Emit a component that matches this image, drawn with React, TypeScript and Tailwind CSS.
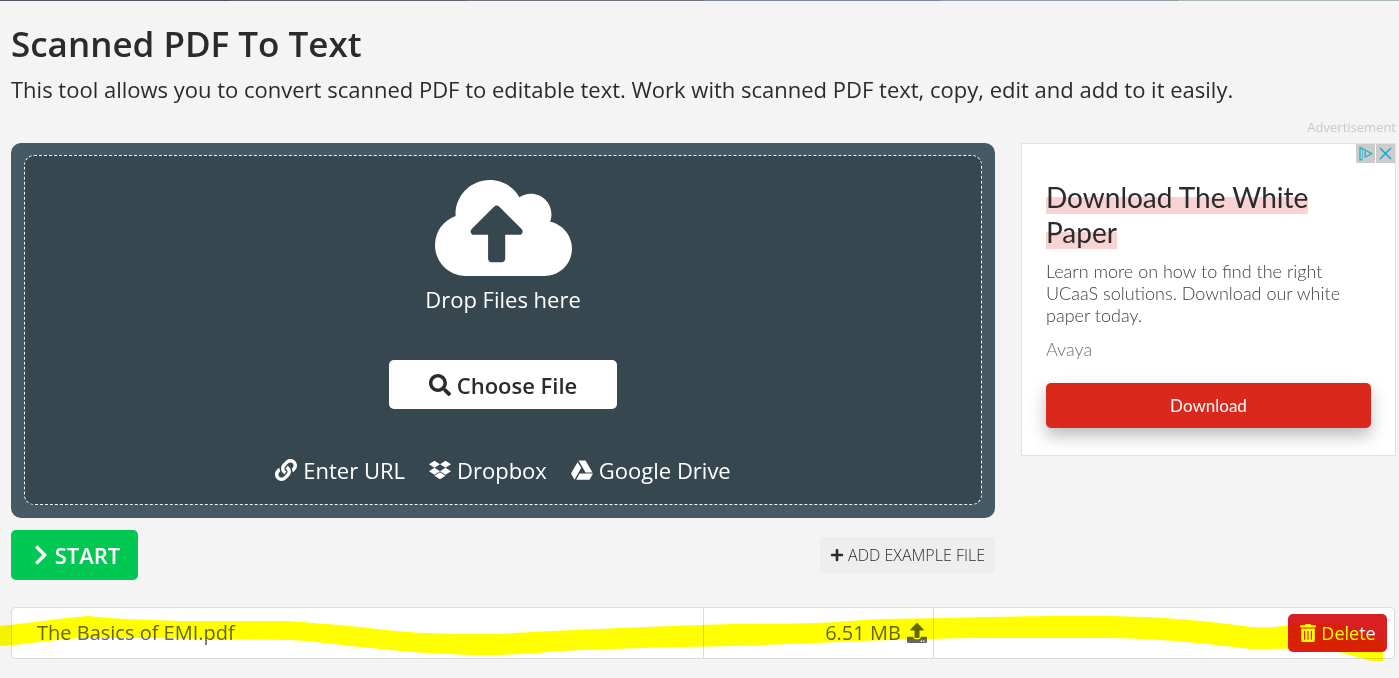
import type { ReactNode } from "react";
import {
  FaChevronRight,
  FaCloudUploadAlt,
  FaDropbox,
  FaGoogleDrive,
  FaLink,
  FaPlus,
  FaSearch,
  FaTrashAlt,
  FaUpload,
} from "react-icons/fa";

const files = [{ name: "The Basics of EMI.pdf", size: "6.51 MB" }];

function TopStrip() {
  return (
    <div className="flex h-px">
      <span className="w-[229px] bg-[#4e5560]" />
      <span className="flex-1 bg-[#5c636e]" />
      <span className="flex-1 bg-[#6c7480]" />
      <span className="flex-1 bg-[#7c8595]" />
      <span className="flex-1 bg-[#929ba8]" />
      <span className="w-[221px] bg-[#a8b5b3]" />
    </div>
  );
}

function SourceLink({ icon, children }: { icon: ReactNode; children: ReactNode }) {
  return (
    <a href="#" className="flex items-center gap-[6px] text-white">
      {icon}
      {children}
    </a>
  );
}

function DropZone() {
  return (
    <section className="rounded-[10px] bg-[#455a64] px-[13px] pt-3 pb-[13px]">
      <div className="flex flex-col items-center rounded-[10px] border border-dashed border-white bg-[#37474f] pt-[17px] pb-[18px] text-[22px] leading-8 text-white">
        <FaCloudUploadAlt className="h-[110px] w-[137px]" />
        <p>Drop Files here</p>
        <button
          type="button"
          className="mt-[45px] flex h-[49px] w-[228px] items-center justify-center gap-[6px] rounded-[5px] bg-white font-semibold text-[#2b2b2b]"
        >
          <FaSearch />
          Choose File
        </button>
        <div className="mt-[45px] flex flex-wrap justify-center gap-6">
          <SourceLink icon={<FaLink />}>Enter URL</SourceLink>
          <SourceLink icon={<FaDropbox />}>Dropbox</SourceLink>
          <SourceLink icon={<FaGoogleDrive />}>Google Drive</SourceLink>
        </div>
      </div>
    </section>
  );
}

function AdCard() {
  return (
    <aside className="w-[375px] shrink-0">
      <p className="text-right text-[13px] leading-[14px] text-[#c8c8c8]">Advertisement</p>
      <div className="relative mt-[9px] border border-[#e2e2e2] bg-white px-6 pt-9 pb-[27px] font-[Lato,sans-serif]">
        {/* AdChoices + fechar */}
        <div className="absolute top-0 right-0 flex gap-px">
          <button type="button" aria-label="AdChoices" className="bg-[#cccccc]">
            <svg viewBox="0 0 19 19" className="size-[19px]" fill="none" stroke="#35b4c8" strokeWidth="1.5">
              <path d="M6.5 15.2L4 16V3.4L15.8 9.7L9.2 13.2V7.2" strokeLinejoin="round" />
              <path d="M6.6 5v9.5" strokeWidth="0.8" />
            </svg>
          </button>
          <button type="button" aria-label="Close ad" className="bg-[#cccccc]">
            <svg viewBox="0 0 19 19" className="size-[19px]" fill="none" stroke="#1aa8cc" strokeWidth="1.5">
              <path d="M4 4l11 11M15 4L4 15" />
            </svg>
          </button>
        </div>
        <h2 className="text-[28px] leading-[35px] text-[#2b2b2b]">
          <a href="#" className="bg-linear-to-b from-transparent from-50% to-[#f9d3d3] to-50%">
            Download The White Paper
          </a>
        </h2>
        <p className="mt-[10px] text-[18px] leading-[22px] font-light text-[#404040]">
          Learn more on how to find the right UCaaS solutions. Download our white paper today.
        </p>
        <p className="mt-3 text-[18px] leading-[22px] font-light text-[#707070]">Avaya</p>
        <button
          type="button"
          className="mt-[23px] h-[45px] w-full rounded-[5px] bg-[#da291c] text-[17px] text-white shadow-[0_8px_16px_rgba(60,64,80,0.35)]"
        >
          Download
        </button>
      </div>
    </aside>
  );
}

function FileTable() {
  return (
    <div className="relative pr-1 pl-[11px]">
      <div className="overflow-hidden rounded border border-[#dcdcdc] bg-white">
        <table className="w-full table-fixed text-[20px] leading-7 text-[#666666]">
          <tbody>
            {files.map(file => (
              <tr key={file.name} className="h-[50px]">
                <td className="w-1/2 pl-[25px]">{file.name}</td>
                <td className="w-1/6 border-x border-[#dcdcdc] pr-[6px]">
                  <span className="flex items-center justify-end gap-[6px]">
                    {file.size}
                    <FaUpload />
                  </span>
                </td>
                <td className="w-1/3 pr-[7px]">
                  <button
                    type="button"
                    className="ml-auto flex h-[38px] w-[99px] items-center justify-center gap-1 rounded-[5px] bg-[#d92020] text-[18px] text-white"
                  >
                    <FaTrashAlt />
                    Delete
                  </button>
                </td>
              </tr>
            ))}
          </tbody>
        </table>
      </div>
      {/* marca-texto por cima da linha */}
      <svg
        viewBox="0 0 1399 60"
        preserveAspectRatio="none"
        aria-hidden="true"
        className="pointer-events-none absolute inset-x-0 top-0 h-[60px] w-full mix-blend-multiply"
      >
        <path
          fill="#ffff00"
          d="M0 19C30 16 60 11 88 9C115 12 150 13 180 14L290 14C310 16 330 17 360 20C400 25 430 27 470 27L500 27C560 23 620 21 700 18C750 16 800 18 850 14L880 12L950 11C1010 9 1060 9 1100 9C1150 9 1200 13 1235 18C1265 22 1275 20 1300 17L1338 17C1350 20 1365 28 1383 34V54H1372L1335 44C1300 41 1280 42 1250 42C1210 37 1160 31 1100 31L990 31C940 31 900 33 860 34C800 37 740 39 680 40C640 41 600 42 560 44C520 48 480 49 450 47C420 46 400 44 370 41C340 38 315 34 290 33L150 31H80C50 33 30 37 0 39Z"
        />
      </svg>
    </div>
  );
}

export default function App() {
  return (
    <div className="min-h-screen bg-[#f4f4f4] font-['Open_Sans',sans-serif] text-[#2b2b2b]">
      <TopStrip />
      <main>
        <header className="px-[11px] pt-[19px]">
          <h1 className="text-[35px] leading-[48px] font-semibold">Scanned PDF To Text</h1>
          <p className="mt-[5px] text-[22px] leading-8">
            This tool allows you to convert scanned PDF to editable text. Work with scanned PDF text, copy, edit and add to it easily.
          </p>
        </header>

        <div className="mt-[15px] flex gap-[26px] pr-[3px] pl-[11px]">
          <div className="min-w-0 flex-1 pt-[23px]">
            <DropZone />
            <div className="mt-3 flex items-center justify-between">
              <button
                type="button"
                className="flex h-[50px] w-[127px] items-center justify-center gap-[6px] rounded-[5px] bg-[#00c853] pl-1 text-[22px] leading-8 font-semibold text-white"
              >
                <FaChevronRight className="w-4" />
                START
              </button>
              <button
                type="button"
                className="flex h-9 items-center gap-1 rounded bg-[#eeeeee] px-[10px] text-[16px] font-light"
              >
                <FaPlus className="size-[14px]" />
                ADD EXAMPLE FILE
              </button>
            </div>
          </div>
          <AdCard />
        </div>

        <div className="mt-[27px]">
          <FileTable />
        </div>
      </main>
    </div>
  );
}
